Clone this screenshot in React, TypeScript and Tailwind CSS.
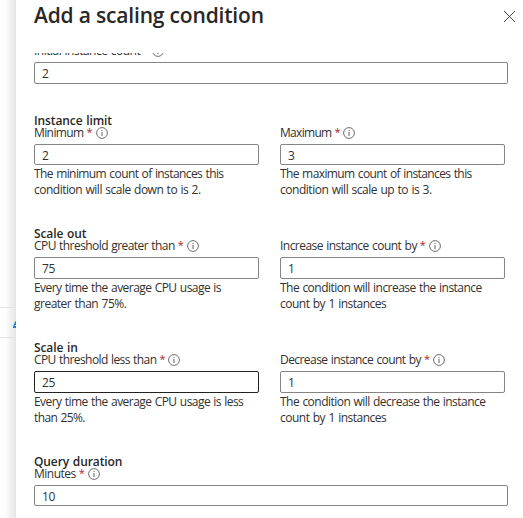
function InfoIcon() {
  return (
    <svg className="mt-px h-3 w-3 shrink-0" viewBox="0 0 12 12" fill="none" stroke="#605e5c">
      <circle cx="6" cy="6" r="5.4" strokeWidth="0.9" />
      <path d="M6 5v4M6 3v1" strokeWidth="1" />
    </svg>
  );
}

interface Line {
  text: string;
  tracking: string;
}

interface FieldProps {
  label: string;
  tracking: string;
  value: string;
  lines?: Line[];
  box?: string;
  width?: string;
}

function Field({
  label,
  tracking,
  value,
  lines = [],
  box = "h-[22px] border-[#868482]",
  width = "w-[225px]",
}: FieldProps) {
  return (
    <div className={width}>
      <div className="flex h-[19px] items-start pt-px">
        <span className={`whitespace-nowrap leading-[14px] ${tracking}`}>{label}</span>
        <span className="ml-[3px] mr-1 w-[5px] text-[11px] leading-3 text-[#a4262c]">*</span>
        <InfoIcon />
      </div>
      <div className={`rounded-[2px] border pl-[7px] pt-[3px] leading-4 tracking-[-0.3px] ${box}`}>{value}</div>
      {lines.length > 0 && (
        <div className="h-[33px] pt-px leading-4">
          {lines.map((line) => (
            <div key={line.text} className={`whitespace-nowrap ${line.tracking}`}>
              {line.text}
            </div>
          ))}
        </div>
      )}
    </div>
  );
}

function Heading({ children }: { children: string }) {
  return (
    <h2 className="h-3 whitespace-nowrap font-semibold leading-4 tracking-[-0.1px] text-[#292827]">{children}</h2>
  );
}

export default function App() {
  return (
    <div className="flex h-[518px] w-[523px] overflow-hidden bg-white font-['Open_Sans','Noto_Sans',sans-serif] text-[12px] text-[#323130]">
      <aside className="flex w-4 shrink-0 flex-col overflow-hidden bg-gradient-to-r from-white from-30% to-[#e5e5e5]">
        <div className="mt-[307px] flex h-[31px] items-center justify-end border-y border-[#e3e3e3]">
          <svg className="mt-1 h-[7px] w-[3px]" viewBox="0 0 3 7">
            <path d="M2.5 0H3V7H0V5.5Z" fill="#1683d8" />
            <path d="M2 4H3V5H1.5Z" fill="#fff" />
          </svg>
        </div>
      </aside>
      <main className="min-w-0 flex-1 bg-white pl-[18px]">
        <header className="flex h-[53px] items-start justify-between pr-2">
          <h1 className="whitespace-nowrap text-[21px] font-semibold leading-[30px] tracking-[-0.18px] text-[#292827]">
            Add a scaling condition
          </h1>
          <svg className="mt-[11px] h-[11px] w-[11px]" viewBox="0 0 11 11" stroke="#323130" strokeWidth="0.9">
            <path d="M0 0L11 11M11 0L0 11" />
          </svg>
        </header>
        <div className="flex h-[465px] flex-col overflow-hidden [word-spacing:0.7px]">
          <section className="-mt-[10px] h-[70px] shrink-0">
            <Field label="Initial instance count" tracking="tracking-[-0.5px]" value="2" width="w-[474px]" />
          </section>
          <section className="h-[113px] shrink-0">
            <Heading>Instance limit</Heading>
            <div className="flex gap-[21px]">
              <Field
                label="Minimum"
                tracking="tracking-[-0.6px]"
                value="2"
                box="h-[21px] border-[#868482]"
                lines={[
                  { text: "The minimum count of instances this", tracking: "tracking-[-0.59px]" },
                  { text: "condition will scale down to is 2.", tracking: "tracking-[-0.49px]" },
                ]}
              />
              <Field
                label="Maximum"
                tracking="tracking-[-0.7px]"
                value="3"
                box="h-[21px] border-[#868482]"
                lines={[
                  { text: "The maximum count of instances this", tracking: "tracking-[-0.6px]" },
                  { text: "condition will scale up to is 3.", tracking: "tracking-[-0.47px]" },
                ]}
              />
            </div>
          </section>
          <section className="h-[114px] shrink-0">
            <Heading>Scale out</Heading>
            <div className="flex gap-[21px]">
              <Field
                label="CPU threshold greater than"
                tracking="tracking-[-0.56px]"
                value="75"
                lines={[
                  { text: "Every time the average CPU usage is", tracking: "tracking-[-0.55px]" },
                  { text: "greater than 75%.", tracking: "tracking-[-0.5px]" },
                ]}
              />
              <Field
                label="Increase instance count by"
                tracking="tracking-[-0.54px]"
                value="1"
                lines={[
                  { text: "The condition will increase the instance", tracking: "tracking-[-0.53px]" },
                  { text: "count by 1 instances", tracking: "tracking-[-0.5px]" },
                ]}
              />
            </div>
          </section>
          <section className="h-[114px] shrink-0">
            <Heading>Scale in</Heading>
            <div className="flex gap-[21px]">
              <Field
                label="CPU threshold less than"
                tracking="tracking-[-0.58px]"
                value="25"
                box="h-[22px] border-[#242322]"
                lines={[
                  { text: "Every time the average CPU usage is less", tracking: "tracking-[-0.55px]" },
                  { text: "than 25%.", tracking: "tracking-[-0.6px]" },
                ]}
              />
              <Field
                label="Decrease instance count by"
                tracking="tracking-[-0.56px]"
                value="1"
                lines={[
                  { text: "The condition will decrease the instance", tracking: "tracking-[-0.53px]" },
                  { text: "count by 1 instances", tracking: "tracking-[-0.5px]" },
                ]}
              />
            </div>
          </section>
          <section className="h-[64px] shrink-0">
            <Heading>Query duration</Heading>
            <Field
              label="Minutes"
              tracking="tracking-[-0.5px]"
              value="10"
              box="h-[21px] border-[#868482]"
              width="w-[474px]"
            />
          </section>
        </div>
      </main>
    </div>
  );
}
